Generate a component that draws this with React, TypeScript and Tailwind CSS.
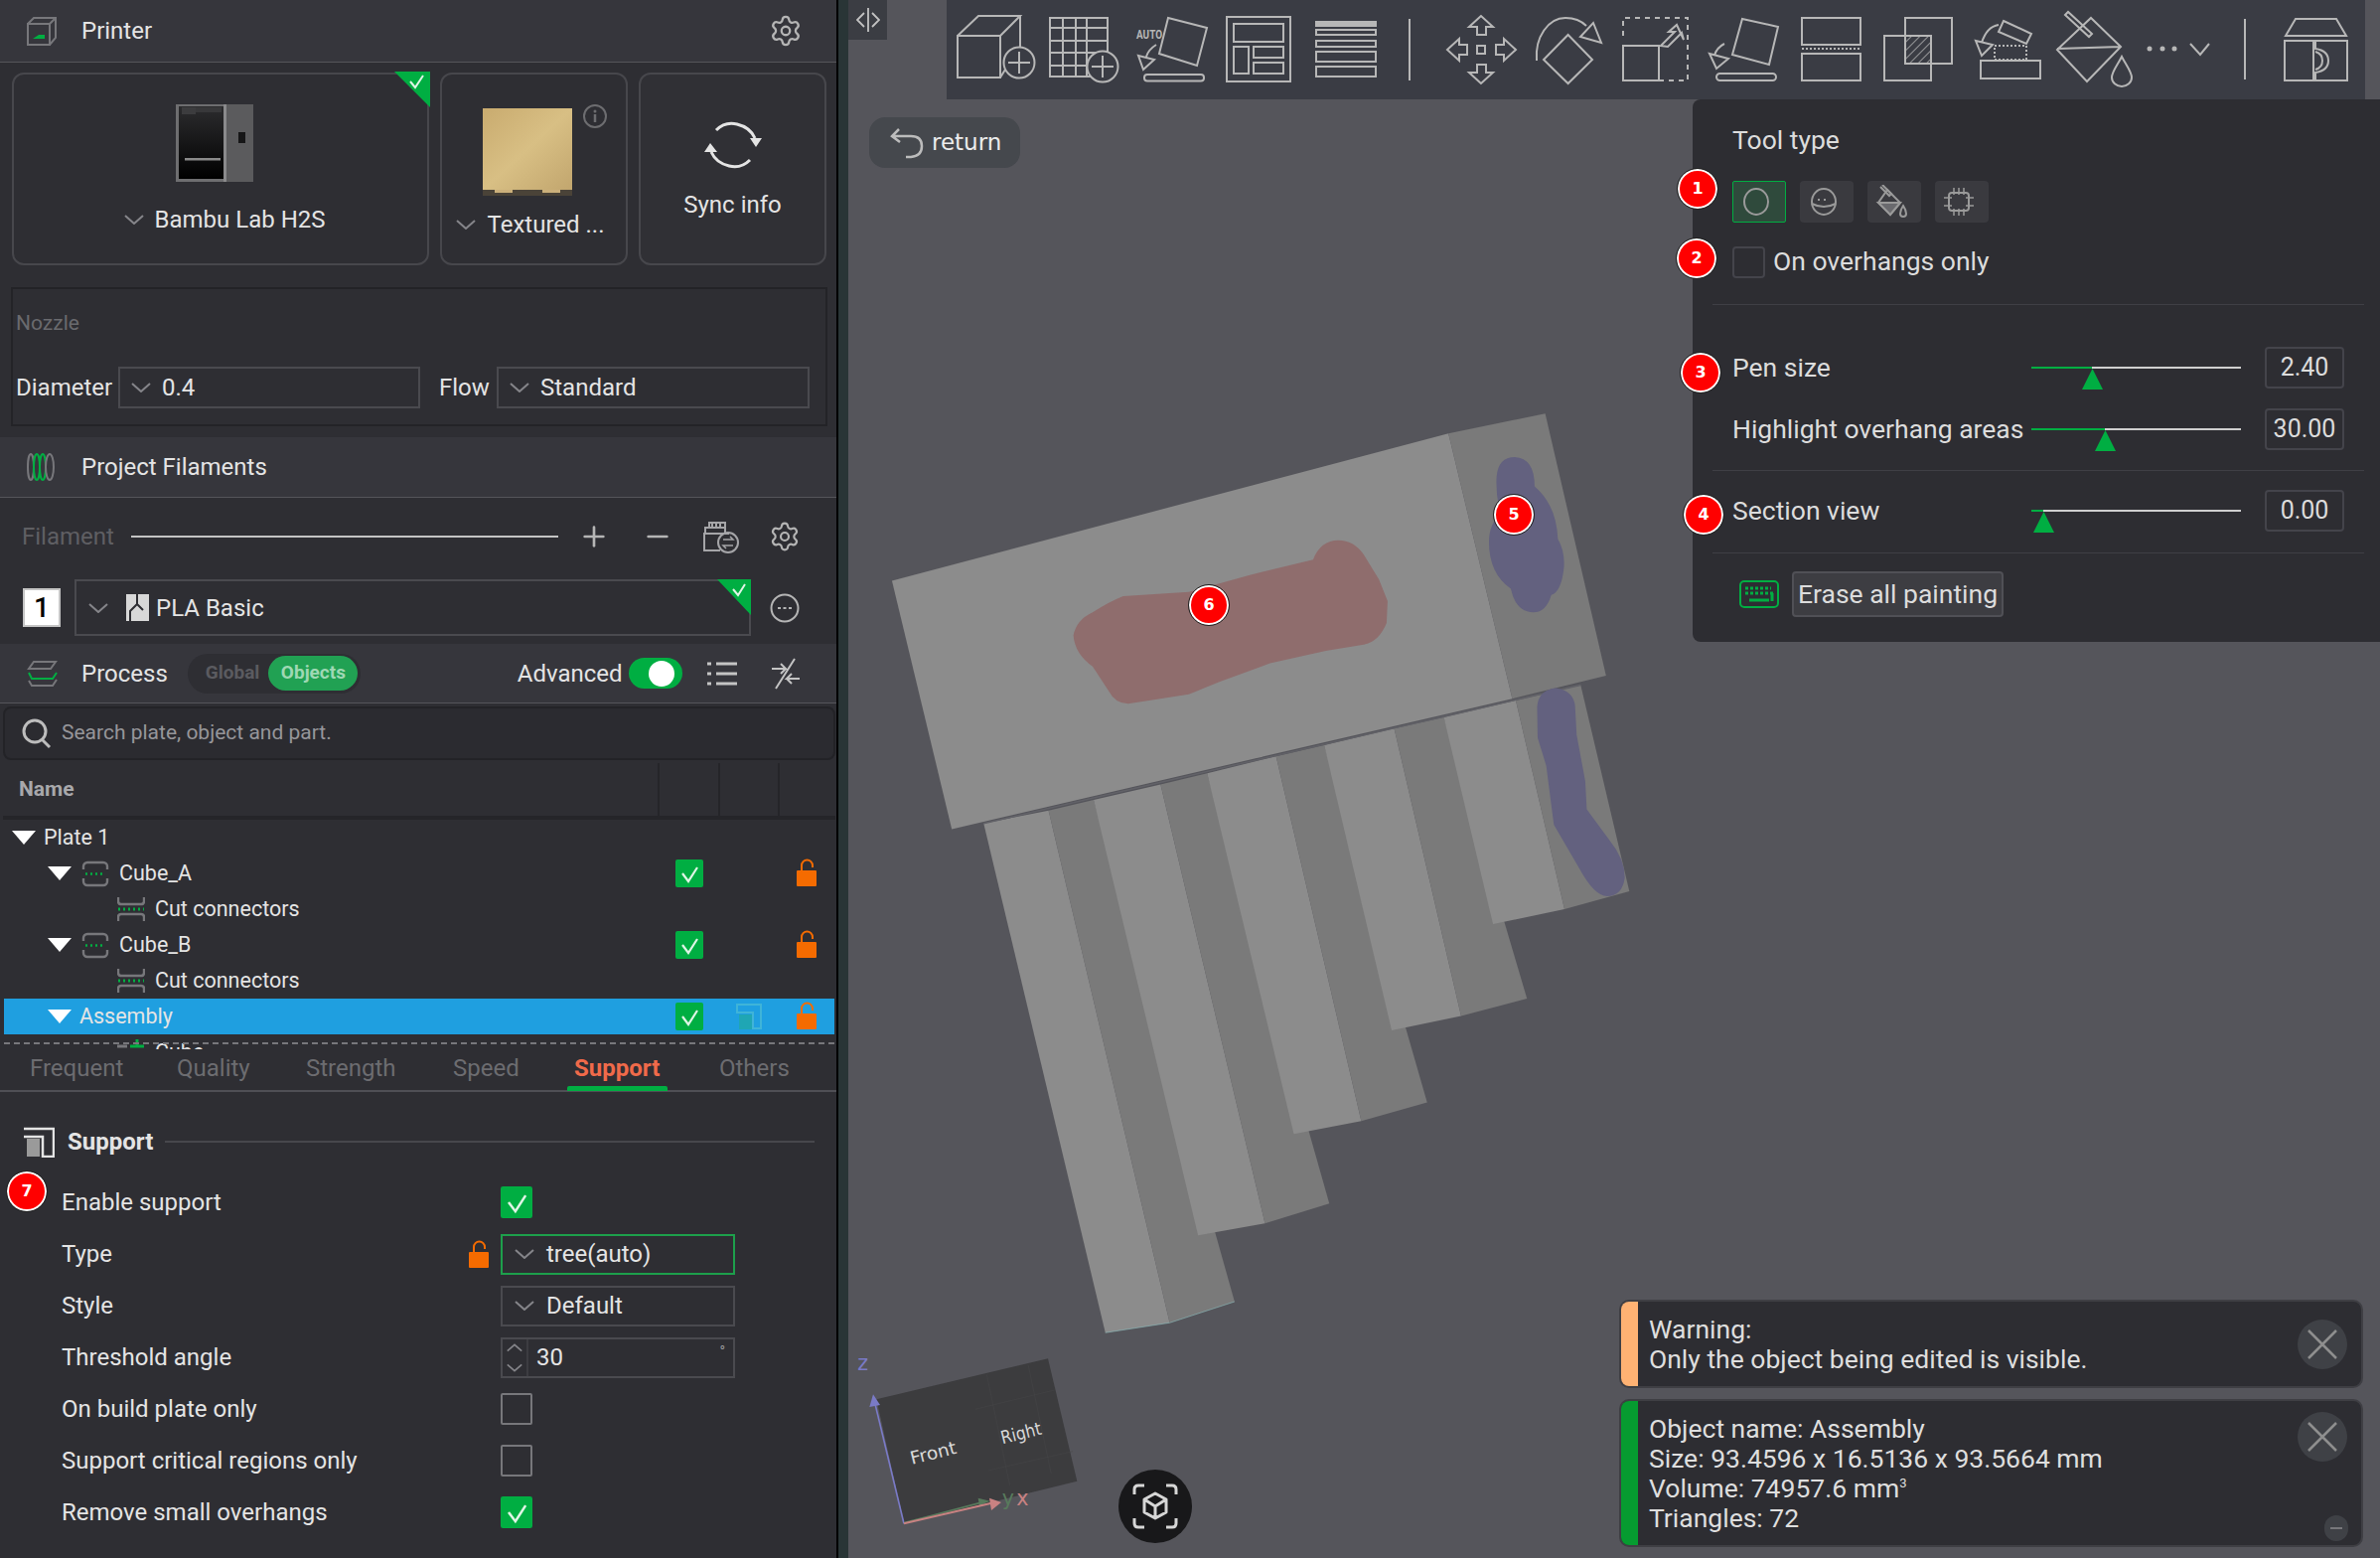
import React from "react";
import { Settings, Plus, Minus } from "lucide-react";

const Chevron = ({ className = "" }: { className?: string }) => (
  <svg width="20" height="10" viewBox="0 0 20 10" fill="none" stroke="#85858a" strokeWidth="2" className={className}>
    <path d="M1 1l9 8 9-8" />
  </svg>
);

const Check = ({ size = 28 }: { size?: number }) => (
  <svg width={size} height={size} viewBox="0 0 28 28">
    <rect width="28" height="28" rx="2" fill="#00ae42" />
    <path d="M7 14l6 8L22 8" fill="none" stroke="#dff5e6" strokeWidth="2.200" />
  </svg>
);

const Lock = () => (
  <svg width="20" height="28" viewBox="0 0 20 28">
    <path d="M5 13V7a5.500 5.500 0 0 1 11 0v2" fill="none" stroke="#f56b00" strokeWidth="2" />
    <rect y="12" width="20" height="16" rx="1" fill="#f56b00" />
  </svg>
);

const Triangle = () => (
  <svg width="24" height="14" viewBox="0 0 24 14">
    <path d="M0 0h24L12 14z" fill="#fff" />
  </svg>
);

const CubeIcon = () => (
  <svg width="28" height="27" viewBox="0 0 28 27" fill="none" stroke="#77777b" strokeWidth="2.400">
    <path d="M2 9V6a4 4 0 0 1 4-4h16a4 4 0 0 1 4 4v3M2 18v3a4 4 0 0 0 4 4h16a4 4 0 0 0 4-4v-3" />
    <path d="M4 13.500h20" stroke="#00ae42" strokeDasharray="2 3" />
  </svg>
);

const CutIcon = () => (
  <svg width="28" height="26" viewBox="0 0 28 26" fill="none" stroke="#77777b" strokeWidth="2.400">
    <path d="M1 1v4q0 3 3 3h20q3 0 3-3V1M1 25v-4q0-3 3-3h20q3 0 3 3v4" />
    <path d="M1 13h26" stroke="#00ae42" strokeWidth="3" strokeDasharray="2 3" />
  </svg>
);

const PartIcon = () => (
  <svg width="28" height="26" viewBox="0 0 28 26" fill="none">
    <path d="M0 7h10" stroke="#77777b" strokeWidth="3" />
    <path d="M20 0v6M13 7h14" stroke="#00ae42" strokeWidth="3" />
  </svg>
);

const Tool = ({ x, w, children }: { x: number; w: number; children: React.ReactNode }) => (
  <svg width={w} height={100} viewBox={`${x} 0 ${w} 100`} fill="none" stroke="#b7b7b7" strokeWidth="2" className="shrink-0">
    {children}
  </svg>
);

const Toolbar = () => (
  <div className="ml-[60px] flex h-[100px] w-[1428px] shrink-0 bg-[#3a3c44]">
    <Tool x={953} w={92}>
      <path d="M964 36h43v42h-43zM964 36l21-20h42l-20 20M1007 78l5-8M1027 16v32" />
      <circle cx="1026" cy="63" r="15.500" />
      <path d="M1026 52v22M1015 63h22" />
    </Tool>
    <Tool x={1045} w={90}>
      <path d="M1057 18h58v59h-58zM1070 18v59M1083 18v59M1094 18v59M1057 28h58M1057 41h58M1057 53h58M1057 66h58" />
      <circle cx="1110" cy="67" r="15.500" fill="#3a3c44" />
      <path d="M1110 56v22M1099 67h22" />
    </Tool>
    <Tool x={1135} w={90}>
      <text x="1144" y="39" fontSize="13" fontFamily="Roboto, sans-serif" fontWeight="700" fill="#b7b7b7" stroke="none" textLength="26" lengthAdjust="spacingAndGlyphs">AUTO</text>
      <path d="M1176 18l39 10-10 38-38-12zM1146 56l16 4-11 10zM1164 45q-8 5-10 12" />
      <rect x="1152" y="75" width="60" height="6.500" rx="3" />
    </Tool>
    <Tool x={1225} w={85}>
      <path d="M1235 17h64v65h-64zM1242 24h50v18h-50zM1242 47h15v27h-15zM1262 47h30v11h-30zM1262 63h30v11h-30z" />
    </Tool>
    <Tool x={1310} w={90}>
      <rect x="1325" y="22" width="60" height="4" fill="#b7b7b7" />
      <path d="M1325 30h60v5h-60zM1325 41h60v6h-60zM1325 52h60v10h-60zM1325 67h60v10h-60z" />
    </Tool>
    <Tool x={1400} w={40}>
      <path d="M1419 19v62" />
    </Tool>
    <Tool x={1440} w={95}>
      <path d="M1491 16l-12 11h8v8h9v-8h7zM1491 84l-12-11h8v-8h9v8h7zM1457 50l12-11v6h8v10h-8v6zM1526 50l-12-11v6h-8v10h8v6zM1487 46h8v8h-8z" />
    </Tool>
    <Tool x={1535} w={90}>
      <path d="M1578.600 35L1603 60l-24.400 24L1554 60zM1547 61c-2-24 12-43 29-43 9 0 16 3 21 8M1604 23l8 20-21-6z" />
    </Tool>
    <Tool x={1625} w={85}>
      <path d="M1634 36v-18h65v63h-29" strokeDasharray="5 5" />
      <path d="M1634 46h36v35h-36zM1672 46l14-14h-6l8-7 7 15-2-7-14 14z" />
    </Tool>
    <Tool x={1710} w={90}>
      <path d="M1754 19l36 8-9 38-37-10zM1721 54l19 5-12 10zM1736 44q-8 4-10 12" />
      <rect x="1728" y="74" width="60" height="7" rx="3.500" />
    </Tool>
    <Tool x={1800} w={85}>
      <path d="M1814 18h59v27h-59zM1814 54h59v27h-59z" />
      <path d="M1814 49h59" strokeDasharray="2 2" />
    </Tool>
    <Tool x={1885} w={95}>
      <defs>
        <pattern id="hatch" width="6" height="6" patternUnits="userSpaceOnUse" patternTransform="rotate(45)">
          <path d="M0 0v6" stroke="#b7b7b7" strokeWidth="1.500" />
        </pattern>
      </defs>
      <path d="M1918 36h26v28h-26z" fill="url(#hatch)" />
      <path d="M1897 36h47v45h-47zM1918 18h47v46h-47z" />
    </Tool>
    <Tool x={1980} w={82}>
      <path d="M1994 61h60v18h-60zM2017 21l28 13-5 10-28-12zM1989 41l17 4-11 11zM2012 25q-12 2-17 18" />
      <path d="M2008 46h32v14h-32z" strokeDasharray="2 2" />
    </Tool>
    <Tool x={2062} w={88}>
      <path d="M2105 18l30 29-34 35-30-32zM2071 49l64-2M2079 15l24 22 3-3-24-22zM2136 57c-4 8-10 15-10 21a10 9 0 0 0 20 0c0-6-6-13-10-21z" />
    </Tool>
    <Tool x={2150} w={90}>
      <circle cx="2164" cy="49" r="1.500" fill="#b7b7b7" />
      <circle cx="2177" cy="49" r="1.500" fill="#b7b7b7" />
      <circle cx="2189" cy="49" r="1.500" fill="#b7b7b7" />
      <path d="M2205 44l10 11 9-11" />
    </Tool>
    <Tool x={2240} w={40}>
      <path d="M2260 19v61" />
    </Tool>
    <Tool x={2280} w={101}>
      <path d="M2311 19h41l10 17h-61zM2300 41h29v40h-29zM2331 41h32v40h-32v-8q13-2 13-12t-13-12zM2331 52q7 2 7 9t-7 9" />
    </Tool>
  </div>
);

const ValueBox = ({ value }: { value: string }) => (
  <div className="ml-[24px] flex h-[42px] w-[80px] items-center justify-center rounded-[4px] border-2 border-[#44444b] text-[25px]">{value}</div>
);

const Slider = ({ fill, thumb }: { fill: string; thumb: string }) => (
  <div className="relative h-[2px] w-[211px] bg-[#cfcfcf]">
    <div className={`absolute left-0 top-0 h-[2px] bg-[#00ae42] ${fill}`} />
    <svg width="21" height="21" viewBox="0 0 21 21" className={`absolute top-[2px] -ml-[10px] ${thumb}`}>
      <path d="M10.500 0L21 21H0z" fill="#00ae42" />
    </svg>
  </div>
);

const PanelRule = () => <div className="ml-[20px] h-px w-[656px] bg-[#3f3f45]" />;

const ToolPanel = () => (
  <div className="absolute left-[850px] top-[100px] h-[546px] w-[692px] rounded-l-[8px] bg-[#2d2d32] text-[26.500px] leading-[32px] text-[#dcdcdc]">
    <div className="flex h-[82px] items-center pl-[40px]">Tool type</div>
    <div className="flex gap-[14px] pl-[40px]">
      <div className="flex h-[42px] w-[54px] items-center justify-center rounded-[2px] border border-[#00ae42] bg-[#2f4a3c] pr-[6px]">
        <svg width="28" height="30" viewBox="0 0 28 30" fill="none" stroke="#9a9a9a" strokeWidth="2"><ellipse cx="14" cy="15" rx="12" ry="13" /></svg>
      </div>
      <div className="flex h-[42px] w-[54px] items-center justify-center rounded-[4px] bg-[#3a3a3f] pr-[6px]">
        <svg width="28" height="30" viewBox="0 0 28 30" fill="none" stroke="#9a9a9a" strokeWidth="2">
          <ellipse cx="14" cy="15" rx="12" ry="13" />
          <path d="M2 17q12 6 24 0" />
          <path d="M8 13h12" strokeDasharray="2 4" />
        </svg>
      </div>
      <div className="flex h-[42px] w-[54px] items-center justify-center rounded-[4px] bg-[#3a3a3f] pr-[6px]">
        <svg width="34" height="34" viewBox="0 0 34 34" fill="none" stroke="#9a9a9a" strokeWidth="2">
          <path d="M13 5l13 13-10 12L4 18zM4 18h22" />
          <path d="M4 18h22l-10 12z" fill="#6a6a6e" />
          <path d="M6 2l9 9 2-2-9-9M29 21c-2 3-3 6-3 8a3 3 0 0 0 6 0c0-2-1-5-3-8z" />
        </svg>
      </div>
      <div className="flex h-[42px] w-[54px] items-center justify-center rounded-[4px] bg-[#3a3a3f] pr-[6px]">
        <svg width="32" height="32" viewBox="0 0 32 32" fill="none" stroke="#9a9a9a" strokeWidth="2">
          <rect x="6" y="7" width="20" height="18" rx="3" />
          <path d="M11 2v7M16 2v7M21 2v7M11 23v7M16 23v7M21 23v7M1 12h8M1 20h8M23 12h8M23 20h8" strokeWidth="1.500" />
        </svg>
      </div>
    </div>
    <div className="mt-[24px] flex h-[32px] items-center pl-[40px]">
      <div className="h-[32px] w-[33px] rounded-[4px] border-2 border-[#44444b]" />
      <span className="ml-[8px] -translate-y-[1px]">On overhangs only</span>
    </div>
    <div className="mt-[26px]"><PanelRule /></div>
    <div className="mt-[42px] flex h-[42px] items-center pl-[40px]">
      <span className="w-[301px]">Pen size</span>
      <Slider fill="w-[61px]" thumb="left-[61px]" />
      <ValueBox value="2.40" />
    </div>
    <div className="mt-[20px] flex h-[42px] items-center pl-[40px]">
      <span className="w-[301px] whitespace-nowrap">Highlight overhang areas</span>
      <Slider fill="w-[74px]" thumb="left-[74px]" />
      <ValueBox value="30.00" />
    </div>
    <div className="mt-[20px]"><PanelRule /></div>
    <div className="mt-[19px] flex h-[42px] items-center pl-[40px]">
      <span className="w-[301px]">Section view</span>
      <Slider fill="w-[12px]" thumb="left-[12px]" />
      <ValueBox value="0.00" />
    </div>
    <div className="mt-[21px]"><PanelRule /></div>
    <div className="mt-[18px] flex items-center pl-[47px]">
      <svg width="40" height="28" viewBox="0 0 40 28" fill="none" stroke="#00ae42" strokeWidth="2">
        <rect x="1" y="1" width="38" height="26" rx="4" />
        <path d="M6 8h26M6 13h28" strokeWidth="3" strokeDasharray="3 2" />
        <path d="M10 20h20" strokeWidth="3" />
        <path d="M33 13v8" strokeWidth="3" />
      </svg>
      <div className="ml-[13px] flex h-[46px] w-[213px] items-center justify-center rounded-[4px] border-2 border-[#505056] bg-[#3d3d42]">Erase all painting</div>
    </div>
  </div>
);

const ModelView = () => (
  <svg width="800" height="980" viewBox="0 0 1568 1568" preserveAspectRatio="none" className="absolute left-[-4px] top-[380px]">
    <polygon points="275,718 403,697 642,1522 515,1538" fill="#8c8c8c" />
    <polygon points="403,697 492,680 770,1488 642,1522" fill="#7a7a7a" />
    <polygon points="492,680 624,655 830,1362 698,1381" fill="#8c8c8c" />
    <polygon points="624,655 716,637 957,1330 830,1362" fill="#7a7a7a" />
    <polygon points="716,637 852,610 1020,1197 887,1218" fill="#8c8c8c" />
    <polygon points="852,610 947,592 1150,1167 1020,1197" fill="#7a7a7a" />
    <polygon points="947,592 1085,565 1217,1028 1080,1051" fill="#8c8c8c" />
    <polygon points="1085,565 1183,547 1347,1000 1217,1028" fill="#7a7a7a" />
    <polygon points="1183,547 1325,520 1421,856 1280,880" fill="#8c8c8c" />
    <polygon points="1325,520 1453,495 1549,827 1421,856" fill="#7a7a7a" />
    <path d="M515 1538L642 1522 770 1488" fill="none" stroke="#8fc4c4" strokeWidth="1" />
    <polygon points="94,327 1192,90 1318,517 212,727" fill="#8c8c8c" />
    <polygon points="1192,90 1383,58 1503,480 1318,517" fill="#7a7a7a" />
    <path d="M275 718L1318 520 1453 495" fill="none" stroke="#626268" strokeWidth="2.500" />
    <path d="M452 415Q458 390 490 378Q520 362 550 352L680 345 800 318 925 293Q940 262 975 262Q1005 262 1025 285L1055 325 1072 360 1070 395Q1055 425 1025 430L950 440 840 460 740 490 680 510 560 525Q535 525 522 505L490 465Q455 445 452 415Z" fill="#8f6d6d" />
    <path d="M1287 160Q1290 128 1323 128Q1362 130 1362 175Q1405 205 1408 260Q1422 280 1420 305Q1415 345 1395 350Q1385 378 1360 378Q1325 378 1315 340Q1272 315 1272 265Q1272 235 1295 220Q1285 190 1287 160Z" fill="#63617f" />
    <path d="M1367 530Q1370 502 1405 500Q1440 505 1442 530L1445 575 1462 650 1465 695 1510 745Q1540 775 1540 805Q1535 835 1505 835Q1480 835 1450 790L1400 720 1385 625 1368 580Z" fill="#63617f" />
  </svg>
);

const Gizmo = () => (
  <svg width="400" height="228" viewBox="0 0 1200 684" className="absolute left-[-4px] top-[1340px]">
    <polygon points="97,205 615,82 703,452 180,580" fill="#3c3c3e" />
    <path d="M430 130l70 335M555 100l70 330M395 235l240-58M435 420l255-58" stroke="#474749" strokeWidth="1.500" fill="none" />
    <text x="204" y="402" fontSize="54" fontFamily="'DejaVu Sans', sans-serif" fill="#d8d8d8" transform="rotate(-14 204 402)" textLength="142" lengthAdjust="spacingAndGlyphs">Front</text>
    <text x="478" y="340" fontSize="54" fontFamily="'DejaVu Sans', sans-serif" fill="#d8d8d8" transform="rotate(-14 478 340)" textLength="124" lengthAdjust="spacingAndGlyphs">Right</text>
    <path d="M180 580L92 215" stroke="#7a7ac6" strokeWidth="5" />
    <path d="M87 190L108 222 76 228z" fill="#7a7ac6" />
    <path d="M180 578L420 515" stroke="#587a5c" strokeWidth="5" />
    <path d="M404 503L440 512 408 526z" fill="#587a5c" />
    <path d="M180 580L445 518" stroke="#c98282" strokeWidth="6" />
    <path d="M438 503L474 516 444 540z" fill="#c98282" />
    <text x="40" y="118" fontSize="62" fontFamily="'DejaVu Sans', sans-serif" fill="#7a7ac6">z</text>
    <text x="476" y="524" fontSize="62" fontFamily="'DejaVu Sans', sans-serif" fill="#587a5c">y</text>
    <text x="520" y="524" fontSize="62" fontFamily="'DejaVu Sans', sans-serif" fill="#c98282">x</text>
  </svg>
);

const CloseBtn = ({ className }: { className: string }) => (
  <div className={`absolute flex h-[50px] w-[50px] items-center justify-center rounded-full bg-[#3f4146] ${className}`}>
    <svg width="32" height="32" viewBox="0 0 32 32" stroke="#8e8e8e" strokeWidth="2.500"><path d="M2 2l28 28M30 2L2 30" /></svg>
  </div>
);

const Notices = () => (
  <div className="absolute left-[776px] top-[1308px] flex w-[749px] flex-col gap-[11px] text-[26.500px] leading-[30px] text-[#dedede]">
    <div className="relative flex h-[89px] overflow-hidden rounded-[10px] border-2 border-[#3f3f44] bg-[#2d2d32]">
      <div className="w-[17px] bg-[#ffb273]" />
      <div className="ml-[11px] pt-[13px]">
        <p>Warning:</p>
        <p>Only the object being edited is visible.</p>
      </div>
      <CloseBtn className="left-[681px] top-[18px]" />
    </div>
    <div className="relative flex h-[149px] overflow-hidden rounded-[10px] border-2 border-[#3f3f44] bg-[#2d2d32]">
      <div className="w-[17px] bg-[#069b30]" />
      <div className="ml-[11px] pt-[13px]">
        <p>Object name: Assembly</p>
        <p>Size: 93.4596 x 16.5136 x 93.5664 mm</p>
        <p>Volume: 74957.6 mm<span className="relative top-[-10px] text-[13px] leading-[0]">3</span></p>
        <p>Triangles: 72</p>
      </div>
      <CloseBtn className="left-[681px] top-[11px]" />
      <div className="absolute left-[708px] top-[115px] flex h-[26px] w-[24px] items-center justify-center rounded-full bg-[#3f4146]">
        <div className="h-[2px] w-[12px] bg-[#77777b]" />
      </div>
    </div>
  </div>
);

const Canvas = () => (
  <main className="relative h-[1568px] flex-1 overflow-hidden bg-[#55555b] font-[Roboto,sans-serif]">
    <div className="flex items-start">
      <div className="flex h-[40px] w-[39px] shrink-0 items-center justify-center bg-[#3b3d43]">
        <svg width="24" height="26" viewBox="0 0 24 26" fill="none" stroke="#c2c2c2" strokeWidth="1.800"><path d="M8 6l-7 7 7 7M16 6l7 7-7 7M12 1v24" /></svg>
      </div>
      <Toolbar />
    </div>
    <button className="absolute left-[21px] top-[118px] flex h-[51px] w-[152px] items-center rounded-[16px] bg-[#45484d] pl-[20px] font-['DejaVu_Sans',sans-serif] text-[23px] text-[#ececec]">
      <svg width="36" height="32" viewBox="0 0 36 32" fill="none" stroke="#bcbcbc" strokeWidth="2.500">
        <path d="M10 2L3 9l8 6M3 9h19q11 0 11 10t-11 11h-5" />
      </svg>
      <span className="ml-[7px]">return</span>
    </button>
    <ModelView />
    <Gizmo />
    <div className="absolute left-[272px] top-[1479px] flex h-[74px] w-[74px] items-center justify-center rounded-full bg-[#18181a]">
      <svg width="46" height="46" viewBox="0 0 46 46" fill="none" stroke="#d6d6d6" strokeWidth="3" strokeLinejoin="round">
        <path d="M2 11V6q0-4 4-4h6M34 2h6q4 0 4 4v5M44 35v5q0 4-4 4h-6M12 44H6q-4 0-4-4v-5" />
        <path d="M23 10l11 6v13l-11 6-11-6V16zM12 16l11 7 11-7M23 23v12" />
      </svg>
    </div>
    <ToolPanel />
    <Notices />
  </main>
);

const Head = ({ icon, title, className = "" }: { icon: React.ReactNode; title: string; className?: string }) => (
  <div className={`flex items-center border-b border-[#55555a] bg-[#36363c] pl-[26px] ${className}`}>
    <div className="flex w-[56px] items-center">{icon}</div>
    <span>{title}</span>
  </div>
);

const PrinterSection = () => (
  <>
    <Head
      className="h-[63px]"
      title="Printer"
      icon={
        <svg width="32" height="30" viewBox="0 0 32 30" fill="none" stroke="#77777b" strokeWidth="2">
          <path d="M2 8h22v21H2zM2 8l6-6h22v20l-6 7M24 8l6-6" />
          <path d="M7 23h12v-4h-6z" fill="#00ae42" stroke="none" />
        </svg>
      }
    />
    <div className="relative">
      <div className="absolute right-[34px] top-[-49px]"><Settings size={34} color="#b5b5b5" strokeWidth={1.600} /></div>
    </div>
    <div className="ml-[12px] mt-[10px] flex h-[194px] gap-[11px]">
      <div className="relative flex w-[420px] flex-col items-center rounded-[12px] border-2 border-[#47474c] pt-[29px]">
        <svg width="78" height="80" viewBox="0 0 78 80" className="mr-[12px]">
          <defs>
            <linearGradient id="door" x1="0" y1="0" x2="0" y2="1">
              <stop offset="0" stopColor="#2c2c2e" />
              <stop offset="0.65" stopColor="#101011" />
              <stop offset="1" stopColor="#000" />
            </linearGradient>
          </defs>
          <rect y="1" width="78" height="78" fill="#5b5b5d" />
          <rect x="48" y="1" width="3" height="78" fill="#8a8a8c" />
          <rect width="48" height="78" y="1" fill="#6e6e70" />
          <rect x="3" y="3" width="45" height="73" fill="url(#door)" />
          <rect x="6" y="4" width="14" height="7" fill="#3c3c3e" />
          <rect x="20" y="4" width="26" height="5" fill="#38383a" />
          <rect x="9" y="55" width="36" height="2.500" fill="#8a8a8a" />
          <rect x="63" y="29" width="7" height="11" fill="#161617" />
        </svg>
        <div className="ml-[8px] mt-[19px] flex items-center text-[24px]">
          <Chevron />
          <span className="ml-[11px]">Bambu Lab H2S</span>
        </div>
        <svg width="36" height="36" viewBox="0 0 36 36" className="absolute right-[-3px] top-[-3px]">
          <path d="M0 0h36v36z" fill="#00ae42" />
          <path d="M16 10l5 6 8-12" fill="none" stroke="#dff5e6" strokeWidth="2" />
        </svg>
      </div>
      <div className="relative flex w-[189px] flex-col items-center rounded-[12px] border-2 border-[#47474c] pt-[34px]">
        <svg width="90" height="88" viewBox="0 0 90 88" className="mr-[14px]">
          <defs>
            <linearGradient id="gold" x1="0" y1="0" x2="1" y2="1">
              <stop offset="0" stopColor="#c9ab6f" />
              <stop offset="0.5" stopColor="#d8bf84" />
              <stop offset="1" stopColor="#c2a66e" />
            </linearGradient>
          </defs>
          <rect width="90" height="82" fill="url(#gold)" />
          <rect y="82" width="90" height="6" fill="#4a4338" />
          <rect x="12" y="82" width="18" height="3" fill="#cbb07b" />
          <rect x="60" y="82" width="18" height="3" fill="#cbb07b" />
        </svg>
        <div className="mr-[8px] mt-[11px] flex items-center text-[24px]">
          <Chevron />
          <span className="ml-[12px]">Textured ...</span>
        </div>
        <svg width="26" height="26" viewBox="0 0 26 26" fill="none" className="absolute left-[141px] top-[29px]">
          <circle cx="13" cy="13" r="11" stroke="#6d6d70" strokeWidth="2" />
          <circle cx="13" cy="8" r="1.500" fill="#6d6d70" />
          <path d="M13 11v8" stroke="#6d6d70" strokeWidth="2.500" />
        </svg>
      </div>
      <div className="flex w-[189px] flex-col items-center rounded-[12px] border-2 border-[#47474c] bg-[#303035] pt-[46px]">
        <svg width="60" height="50" viewBox="0 0 60 50" fill="none" stroke="#e4e4e4" strokeWidth="3">
          <path d="M13 10q9-9 21-6 13 3 18 14M47 40q-9 9-21 6Q13 43 8 32" />
          <path d="M47 18h12l-6 9zM1 32h13l-7-9z" fill="#e4e4e4" stroke="none" />
        </svg>
        <span className="mt-[17px] text-[24px]">Sync info</span>
      </div>
    </div>
    <div className="ml-[11px] mt-[22px] h-[140px] w-[822px] border-2 border-[#232327] pl-[3px]">
      <div className="pt-[21px] text-[21px] leading-[26px] text-[#6a6a6e]">Nozzle</div>
      <div className="mt-[31px] flex items-center">
        <span className="w-[103px]">Diameter</span>
        <div className="flex h-[42px] w-[304px] items-center border-2 border-[#4a4a4f] pl-[11px]">
          <Chevron />
          <span className="ml-[11px]">0.4</span>
        </div>
        <span className="ml-[19px] w-[58px]">Flow</span>
        <div className="flex h-[42px] w-[315px] items-center border-2 border-[#4a4a4f] pl-[11px]">
          <Chevron />
          <span className="ml-[11px]">Standard</span>
        </div>
      </div>
    </div>
  </>
);

const FilamentSection = () => (
  <>
    <Head
      className="mt-[11px] h-[61px]"
      title="Project Filaments"
      icon={
        <svg width="30" height="30" viewBox="0 0 30 30" fill="none" strokeWidth="2">
          <ellipse cx="5" cy="15" rx="3" ry="13" stroke="#77777b" />
          <ellipse cx="11" cy="15" rx="3" ry="13" stroke="#00ae42" />
          <ellipse cx="17" cy="15" rx="3" ry="13" stroke="#00ae42" />
          <ellipse cx="24" cy="15" rx="4" ry="13" stroke="#77777b" />
        </svg>
      }
    />
    <div className="flex h-[82px] items-center pb-[4px] pl-[22px]">
      <span className="w-[110px] text-[#5f5f63]">Filament</span>
      <div className="h-[2px] w-[430px] bg-[#c4c4c4]" />
      <Plus size={32} color="#b5b5b5" strokeWidth={2} className="ml-[20px]" />
      <Minus size={32} color="#b5b5b5" strokeWidth={2} className="ml-[32px]" />
      <svg width="38" height="34" viewBox="0 0 38 34" fill="none" stroke="#a5a5a8" strokeWidth="2" className="ml-[28px]">
        <path d="M4 8h20v6H4zM2 14h26M3 14v17h16M8 8V3h16v5M11 8V4M15 8V4M19 8V4" />
        <circle cx="27" cy="23" r="10" />
        <path d="M22 20h10l-3-3M32 26H22l3 3" strokeWidth="1.500" />
      </svg>
      <Settings size={32} color="#b5b5b5" strokeWidth={1.600} className="ml-[30px]" />
    </div>
    <div className="flex h-[57px] items-center pl-[23px]">
      <div className="flex h-[39px] w-[38px] items-center justify-center border-2 border-[#c5c5c5] bg-white text-[28px] font-medium text-black">1</div>
      <div className="relative ml-[14px] flex h-[57px] w-[681px] items-center border-2 border-[#4a4a4f] pl-[12px]">
        <Chevron />
        <svg width="23" height="27" viewBox="0 0 23 27" className="ml-[18px]">
          <rect width="23" height="27" fill="#d8d8d8" />
          <path d="M11 0v10L4 17v10M11 10l6 6" fill="none" stroke="#2e2e33" strokeWidth="2" />
        </svg>
        <span className="ml-[7px]">PLA Basic</span>
        <svg width="34" height="36" viewBox="0 0 34 36" className="absolute right-[-2px] top-[-2px]">
          <path d="M0 0h34v36z" fill="#00ae42" />
          <path d="M16 10l5 6 7-11" fill="none" stroke="#dff5e6" strokeWidth="2" />
        </svg>
      </div>
      <svg width="30" height="30" viewBox="0 0 30 30" fill="none" stroke="#b5b5b5" strokeWidth="2" className="ml-[19px]">
        <circle cx="15" cy="15" r="13.500" />
        <path d="M8 15h3M13.500 15h3M19 15h3" />
      </svg>
    </div>
  </>
);

const ProcessSection = () => (
  <div className="mt-[8px] flex h-[60px] items-center border-b border-[#55555a] bg-[#36363c] pl-[26px]">
    <div className="w-[56px]">
      <svg width="34" height="28" viewBox="0 0 34 28" fill="none" stroke="#77777b" strokeWidth="2">
        <path d="M8 2h22l-5 7H3zM3 21l3 5h21l4-6" />
        <path d="M3 13l3 6h21l4-6" stroke="#00ae42" />
      </svg>
    </div>
    <span>Process</span>
    <div className="ml-[20px] flex h-[40px] w-[174px] items-center rounded-full bg-[#2e2e33] text-[19px] font-bold">
      <span className="ml-[18px] text-[#5b5b60]">Global</span>
      <div className="ml-[9px] flex h-[35px] w-[90px] items-center justify-center rounded-full bg-[#21a153] text-[#9fd8b4]">Objects</div>
    </div>
    <span className="ml-[158px]">Advanced</span>
    <div className="ml-[6px] flex h-[31px] w-[54px] items-center justify-end rounded-full bg-[#00ae42] pr-[8px]">
      <div className="h-[26px] w-[26px] rounded-full bg-white" />
    </div>
    <svg width="30" height="26" viewBox="0 0 30 26" fill="none" stroke="#c4c4c4" strokeWidth="3" className="ml-[25px]">
      <path d="M0 3h4M9 3h21M0 13h4M9 13h21M0 23h4M9 23h21" />
    </svg>
    <svg width="30" height="34" viewBox="0 0 30 34" fill="none" stroke="#c4c4c4" strokeWidth="2" className="ml-[34px]">
      <path d="M1 12h14l-5-5M15 12l-5 5M29 22H16l5-5M16 22l5 5M24 2L5 32" />
    </svg>
  </div>
);

const Row = ({ pad, icon, label, selected, lock, support, tri = true }: { pad: string; icon?: React.ReactNode; label: string; selected?: boolean; lock?: boolean; support?: boolean; tri?: boolean }) => (
  <div className={`relative flex h-[36px] items-center text-[21.500px] ${pad} ${selected ? "bg-[#1f9fe0]" : ""}`}>
    {tri && <Triangle />}
    {icon}
    <span>{label}</span>
    {lock && (
      <>
        <div className="absolute left-[676px] top-[4px] flex"><Check /></div>
        <div className="absolute left-[798px] top-[3px] flex"><Lock /></div>
      </>
    )}
    {support && (
      <svg width="28" height="28" viewBox="0 0 28 28" fill="none" className="absolute left-[736px] top-[4px]">
        <path d="M2 2h24v24h-8V10H2z" stroke="#3fb4d8" strokeWidth="2" />
        <rect x="4" y="12" width="13" height="15" fill="#1fa6b4" />
      </svg>
    )}
  </div>
);

const ObjectTree = () => (
  <>
    <div className="ml-[3px] mr-[1px] mt-[3px] flex h-[54px] items-center rounded-[8px] border-2 border-[#232327] bg-[#2b2b30] pl-[16px] text-[21px] text-[#96969a]">
      <svg width="32" height="32" viewBox="0 0 32 32" fill="none" stroke="#bdbdbd" strokeWidth="3">
        <circle cx="14" cy="14" r="11" />
        <path d="M21 22l8 8" />
      </svg>
      <span className="ml-[9px]">Search plate, object and part.</span>
    </div>
    <div className="ml-[3px] mr-[1px] mt-[3px] flex h-[57px] border-b-4 border-[#252529]">
      <div className="flex w-[659px] items-center pl-[16px] text-[21px] font-bold text-[#a8a8ab]">Name</div>
      <div className="w-[61px] border-l-2 border-[#252529]" />
      <div className="w-[60px] border-l-2 border-[#252529]" />
      <div className="flex-1 border-l-2 border-[#252529]" />
    </div>
    <div className="relative ml-[4px] mr-[2px] h-[231px] overflow-hidden">
      <Row pad="pl-[8px]" icon={<div className="w-[8px]" />} label="Plate 1" />
      <Row pad="pl-[44px]" icon={<div className="mx-[10px] flex"><CubeIcon /></div>} label="Cube_A" lock />
      <Row pad="pl-[114px]" tri={false} icon={<div className="mr-[10px] flex"><CutIcon /></div>} label="Cut connectors" />
      <Row pad="pl-[44px]" icon={<div className="mx-[10px] flex"><CubeIcon /></div>} label="Cube_B" lock />
      <Row pad="pl-[114px]" tri={false} icon={<div className="mr-[10px] flex"><CutIcon /></div>} label="Cut connectors" />
      <Row pad="pl-[44px]" icon={<div className="w-[8px]" />} label="Assembly" selected lock support />
      <Row pad="pl-[114px]" tri={false} icon={<div className="mr-[10px] flex"><PartIcon /></div>} label="Cube" />
      <div className="absolute inset-x-0 top-[224px] border-b-2 border-dashed border-[#77777b]" />
    </div>
  </>
);

const SettingRow = ({ label, children }: { label: string; children?: React.ReactNode }) => (
  <div className="relative flex h-[52px] items-center pl-[62px]">
    <span className="w-[442px] whitespace-nowrap">{label}</span>
    {children}
  </div>
);

const Empty = () => <div className="h-[32px] w-[32px] rounded-[2px] border-2 border-[#77777b]" />;

const SupportTabs = () => (
  <>
    <div className="flex h-[43px] items-center border-b-2 border-[#4f4f55] pb-[4px] pl-[30px] text-[#6c6c70]">
      <span className="w-[148px]">Frequent</span>
      <span className="w-[130px]">Quality</span>
      <span className="w-[148px]">Strength</span>
      <span className="w-[122px]">Speed</span>
      <span className="relative w-[146px] font-bold text-[#f06a4a]">
        Support
        <span className="absolute left-[-7px] top-[36px] h-[5px] w-[101px] rounded-t-[2px] bg-[#00ae42]" />
      </span>
      <span>Others</span>
    </div>
    <div className="flex h-[67px] items-end pl-[23px]">
      <svg width="32" height="33" viewBox="0 0 32 33" fill="none" stroke="#e4e4e4" strokeWidth="2.500" className="mb-[1px]">
        <path d="M1 4h30v28H20V12H1" />
        <rect x="4" y="14" width="13" height="18" fill="#9a9a9a" stroke="none" />
      </svg>
      <span className="mb-[-1px] ml-[13px] font-bold">Support</span>
      <div className="mb-[16px] ml-[12px] h-[2px] w-[654px] bg-[#47474c]" />
    </div>
    <div className="pt-[18px]">
      <SettingRow label="Enable support"><Check size={32} /></SettingRow>
      <SettingRow label="Type">
        <div className="absolute left-[472px] top-[12px] flex"><Lock /></div>
        <div className="flex h-[41px] w-[236px] items-center border-2 border-[#1d9f4b] pl-[12px]">
          <Chevron />
          <span className="ml-[12px]">tree(auto)</span>
        </div>
      </SettingRow>
      <SettingRow label="Style">
        <div className="flex h-[41px] w-[236px] items-center border-2 border-[#4a4a4f] pl-[12px]">
          <Chevron />
          <span className="ml-[12px]">Default</span>
        </div>
      </SettingRow>
      <SettingRow label="Threshold angle">
        <div className="relative flex h-[41px] w-[236px] items-center border-2 border-[#4a4a4f]">
          <div className="flex h-full w-[26px] flex-col items-center justify-between border-r-2 border-[#3c3c41] py-[4px]">
            <Chevron className="h-[9px] w-[16px] rotate-180" />
            <Chevron className="h-[9px] w-[16px]" />
          </div>
          <span className="ml-[8px]">30</span>
          <span className="absolute right-[8px] top-[1px] text-[15px] text-[#9a9a9e]">°</span>
        </div>
      </SettingRow>
      <SettingRow label="On build plate only"><Empty /></SettingRow>
      <SettingRow label="Support critical regions only"><Empty /></SettingRow>
      <SettingRow label="Remove small overhangs"><Check size={32} /></SettingRow>
    </div>
  </>
);

const Badge = ({ n, className }: { n: number; className: string }) => (
  <div className={`absolute flex h-[40px] w-[40px] items-center justify-center rounded-full border-2 border-white bg-[#f00] font-['DejaVu_Sans',sans-serif] text-[16px] font-bold text-white outline outline-1 outline-[#222] ${className}`}>
    {n}
  </div>
);

export default function App() {
  return (
    <div className="relative flex h-[1568px] w-[2396px] overflow-hidden bg-[#293536] font-[Roboto,sans-serif] text-[24px] text-[#e4e4e4]">
      <aside className="h-[1568px] w-[842px] shrink-0 overflow-hidden bg-[#2e2e33]">
        <PrinterSection />
        <FilamentSection />
        <ProcessSection />
        <ObjectTree />
        <SupportTabs />
      </aside>
      <div className="w-[12px] shrink-0 border-l-2 border-black" />
      <Canvas />
      <Badge n={1} className="left-[1689px] top-[170px]" />
      <Badge n={2} className="left-[1688px] top-[240px]" />
      <Badge n={3} className="left-[1692px] top-[355px]" />
      <Badge n={4} className="left-[1695px] top-[498px]" />
      <Badge n={5} className="left-[1504px] top-[498px]" />
      <Badge n={6} className="left-[1197px] top-[589px]" />
      <Badge n={7} className="left-[7px] top-[1179px]" />
    </div>
  );
}
